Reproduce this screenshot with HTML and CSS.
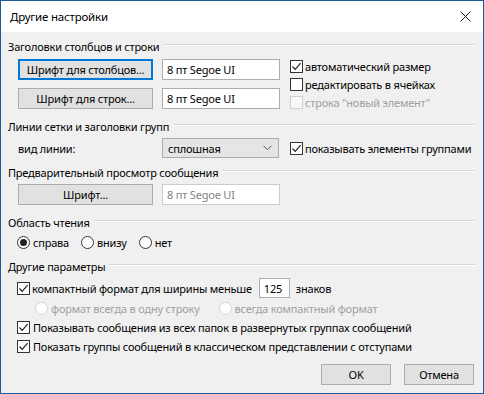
FILE: index.html
```html
<!DOCTYPE html>
<html lang="ru">
<head>
    <meta charset="UTF-8">
    <title>Другие настройки</title>
    <link rel="stylesheet" href="styles.css">
</head>
<body>
    <div class="window">
        <div class="titlebar">
            <span class="title">Другие настройки</span>
            <svg class="close" width="11" height="11" viewBox="0 0 11 11"><path d="M0.5 0.5L10.5 10.5M10.5 0.5L0.5 10.5" stroke="#111" stroke-width="1"/></svg>
        </div>

        <div class="content">
            <div class="group-head"><span>Заголовки столбцов и строки</span></div>
            <div class="group-body g1">
                <div class="font-grid">
                    <button class="btn default">Шрифт для столбцов...</button>
                    <div class="field">8 пт Segoe UI</div>
                    <button class="btn">Шрифт для строк...</button>
                    <div class="field">8 пт Segoe UI</div>
                </div>
                <div class="checks">
                    <label class="check"><span class="box"><svg width="11" height="11" viewBox="0 0 11 11"><path d="M1.5 5.5L4.2 8.3L9.6 2.2" fill="none" stroke="#222" stroke-width="1.2"/></svg></span>автоматический размер</label>
                    <label class="check"><span class="box"></span>редактировать в ячейках</label>
                    <label class="check disabled"><span class="box"></span>строка "новый элемент"</label>
                </div>
            </div>

            <div class="group-head"><span>Линии сетки и заголовки групп</span></div>
            <div class="group-body g2">
                <div class="row">
                    <span class="line-label">вид линии:</span>
                    <div class="select">
                        <span>сплошная</span>
                        <svg width="9" height="6" viewBox="0 0 9 6"><path d="M0.5 0.8L4.5 4.8L8.5 0.8" fill="none" stroke="#555" stroke-width="1"/></svg>
                    </div>
                    <label class="check group-check"><span class="box"><svg width="11" height="11" viewBox="0 0 11 11"><path d="M1.5 5.5L4.2 8.3L9.6 2.2" fill="none" stroke="#222" stroke-width="1.2"/></svg></span>показывать элементы группами</label>
                </div>
            </div>

            <div class="group-head"><span>Предварительный просмотр сообщения</span></div>
            <div class="group-body g3">
                <div class="row tall">
                    <button class="btn">Шрифт...</button>
                    <div class="field disabled">8 пт Segoe UI</div>
                </div>
            </div>

            <div class="group-head"><span>Область чтения</span></div>
            <div class="group-body g4">
                <div class="radios">
                    <label class="radio"><span class="ring on"></span>справа</label>
                    <label class="radio"><span class="ring"></span>внизу</label>
                    <label class="radio"><span class="ring"></span>нет</label>
                </div>
            </div>

            <div class="group-head"><span>Другие параметры</span></div>
            <div class="group-body g5">
                <div class="row compact">
                    <label class="check"><span class="box"><svg width="11" height="11" viewBox="0 0 11 11"><path d="M1.5 5.5L4.2 8.3L9.6 2.2" fill="none" stroke="#222" stroke-width="1.2"/></svg></span>компактный формат для ширины меньше</label>
                    <div class="field small">125</div>
                    <span class="unit">знаков</span>
                </div>
                <div class="radios sub">
                    <label class="radio disabled"><span class="ring"></span>формат всегда в одну строку</label>
                    <label class="radio disabled"><span class="ring"></span>всегда компактный формат</label>
                </div>
                <label class="check line"><span class="box"><svg width="11" height="11" viewBox="0 0 11 11"><path d="M1.5 5.5L4.2 8.3L9.6 2.2" fill="none" stroke="#222" stroke-width="1.2"/></svg></span>Показывать сообщения из всех папок в развернутых группах сообщений</label>
                <label class="check line"><span class="box"><svg width="11" height="11" viewBox="0 0 11 11"><path d="M1.5 5.5L4.2 8.3L9.6 2.2" fill="none" stroke="#222" stroke-width="1.2"/></svg></span>Показать группы сообщений в классическом представлении с отступами</label>
            </div>

            <div class="footer">
                <button class="btn action">OK</button>
                <button class="btn action">Отмена</button>
            </div>
        </div>
    </div>
</body>
</html>
```

FILE: styles.css
```css
body {
    margin: 0;
    font-family: "Noto Sans", "Open Sans", sans-serif;
    font-size: 11px;
    letter-spacing: -0.2px;
    color: #000;
}
.window {
    width: 484px;
    height: 394px;
    box-sizing: border-box;
    border: 1px solid #1d5a9c;
    background-color: #f0f0f0;
    display: flex;
    flex-direction: column;
}
.titlebar {
    height: 31px;
    background-color: #fff;
    display: flex;
    align-items: center;
    justify-content: space-between;
    padding: 0 12px 0 9px;
    flex-shrink: 0;
    font-size: 11.5px;
}
.content {
    flex: 1;
    display: flex;
    flex-direction: column;
    padding: 6px 8px 8px 7px;
}
.group-head {
    height: 16px;
    display: flex;
    align-items: center;
    gap: 4px;
    white-space: nowrap;
}
.group-head::after {
    content: "";
    flex: 1;
    border-top: 1px solid #d8d8d8;
    border-bottom: 1px solid #fff;
    margin-top: -3px;
}
.group-body {
    box-sizing: border-box;
    padding-left: 10px;
}
.g1 {
    height: 64px;
    display: flex;
    align-items: flex-start;
}
.font-grid {
    display: grid;
    grid-template-columns: 135px 118px;
    grid-auto-rows: 21px;
    column-gap: 9px;
    row-gap: 8px;
    margin-top: 5px;
}
.checks {
    margin-left: 10px;
    margin-top: 3px;
    display: flex;
    flex-direction: column;
}
.check {
    display: flex;
    align-items: center;
    gap: 2px;
    height: 18px;
    white-space: nowrap;
}
.box {
    width: 11px;
    height: 11px;
    border: 1px solid #333;
    background-color: #fff;
    display: flex;
    flex-shrink: 0;
}
.check.disabled {
    color: #a0a0a0;
}
.check.disabled .box {
    border-color: #d0d0d0;
    background-color: #f7f7f7;
}
.btn {
    height: 21px;
    border: 1px solid #adadad;
    background-color: #e1e1e1;
    font-family: inherit;
    font-size: 11px;
    letter-spacing: inherit;
    color: #000;
    padding: 0;
    margin: 0;
    white-space: nowrap;
}
.btn.default {
    border: 2px solid #0078d7;
}
.field {
    box-sizing: border-box;
    height: 21px;
    border: 1px solid #abadb3;
    background-color: #fff;
    padding-left: 4px;
    display: flex;
    align-items: center;
}
.field.disabled {
    border-color: #cccccc;
    color: #838383;
}
.row {
    display: flex;
    align-items: center;
    height: 20px;
}
.g2 {
    height: 30px;
    padding-top: 4px;
}
.line-label {
    width: 144px;
}
.select {
    box-sizing: border-box;
    width: 117px;
    height: 20px;
    border: 1px solid #acacac;
    background-color: #e5e5e5;
    display: flex;
    align-items: center;
    justify-content: space-between;
    padding: 0 6px 0 5px;
}
.group-check {
    margin-left: 11px;
}
.g3 {
    height: 34px;
    padding-top: 4px;
}
.row.tall {
    height: 21px;
}
.row.tall .btn {
    width: 135px;
}
.row.tall .field {
    width: 118px;
    margin-left: 9px;
}
.g4 {
    height: 28px;
    padding-top: 4px;
    padding-left: 9px;
}
.radios {
    display: flex;
    gap: 12px;
    height: 16px;
}
.radio {
    display: flex;
    align-items: center;
    gap: 3px;
    white-space: nowrap;
}
.ring {
    box-sizing: border-box;
    width: 13px;
    height: 13px;
    border: 1px solid #333;
    border-radius: 50%;
    background-color: #fff;
    display: flex;
    align-items: center;
    justify-content: center;
}
.ring.on::after {
    content: "";
    width: 7px;
    height: 7px;
    border-radius: 50%;
    background-color: #222;
}
.radio.disabled {
    color: #a0a0a0;
}
.radio.disabled .ring {
    border-color: #d4d4d4;
}
.g5 {
    padding-top: 4px;
    padding-left: 9px;
    display: flex;
    flex-direction: column;
}
.compact .check {
    height: 20px;
}
.field.small {
    width: 31px;
    height: 20px;
    margin-left: 7px;
}
.unit {
    margin-left: 6px;
}
.radios.sub {
    margin-top: 2px;
    padding-left: 18px;
    gap: 19px;
}
.check.line {
    height: 16px;
    margin-top: 3px;
    gap: 3px;
}
.footer {
    margin-top: auto;
    display: flex;
    justify-content: flex-end;
    gap: 13px;
    padding-right: 1px;
}
.btn.action {
    width: 70px;
}
```
